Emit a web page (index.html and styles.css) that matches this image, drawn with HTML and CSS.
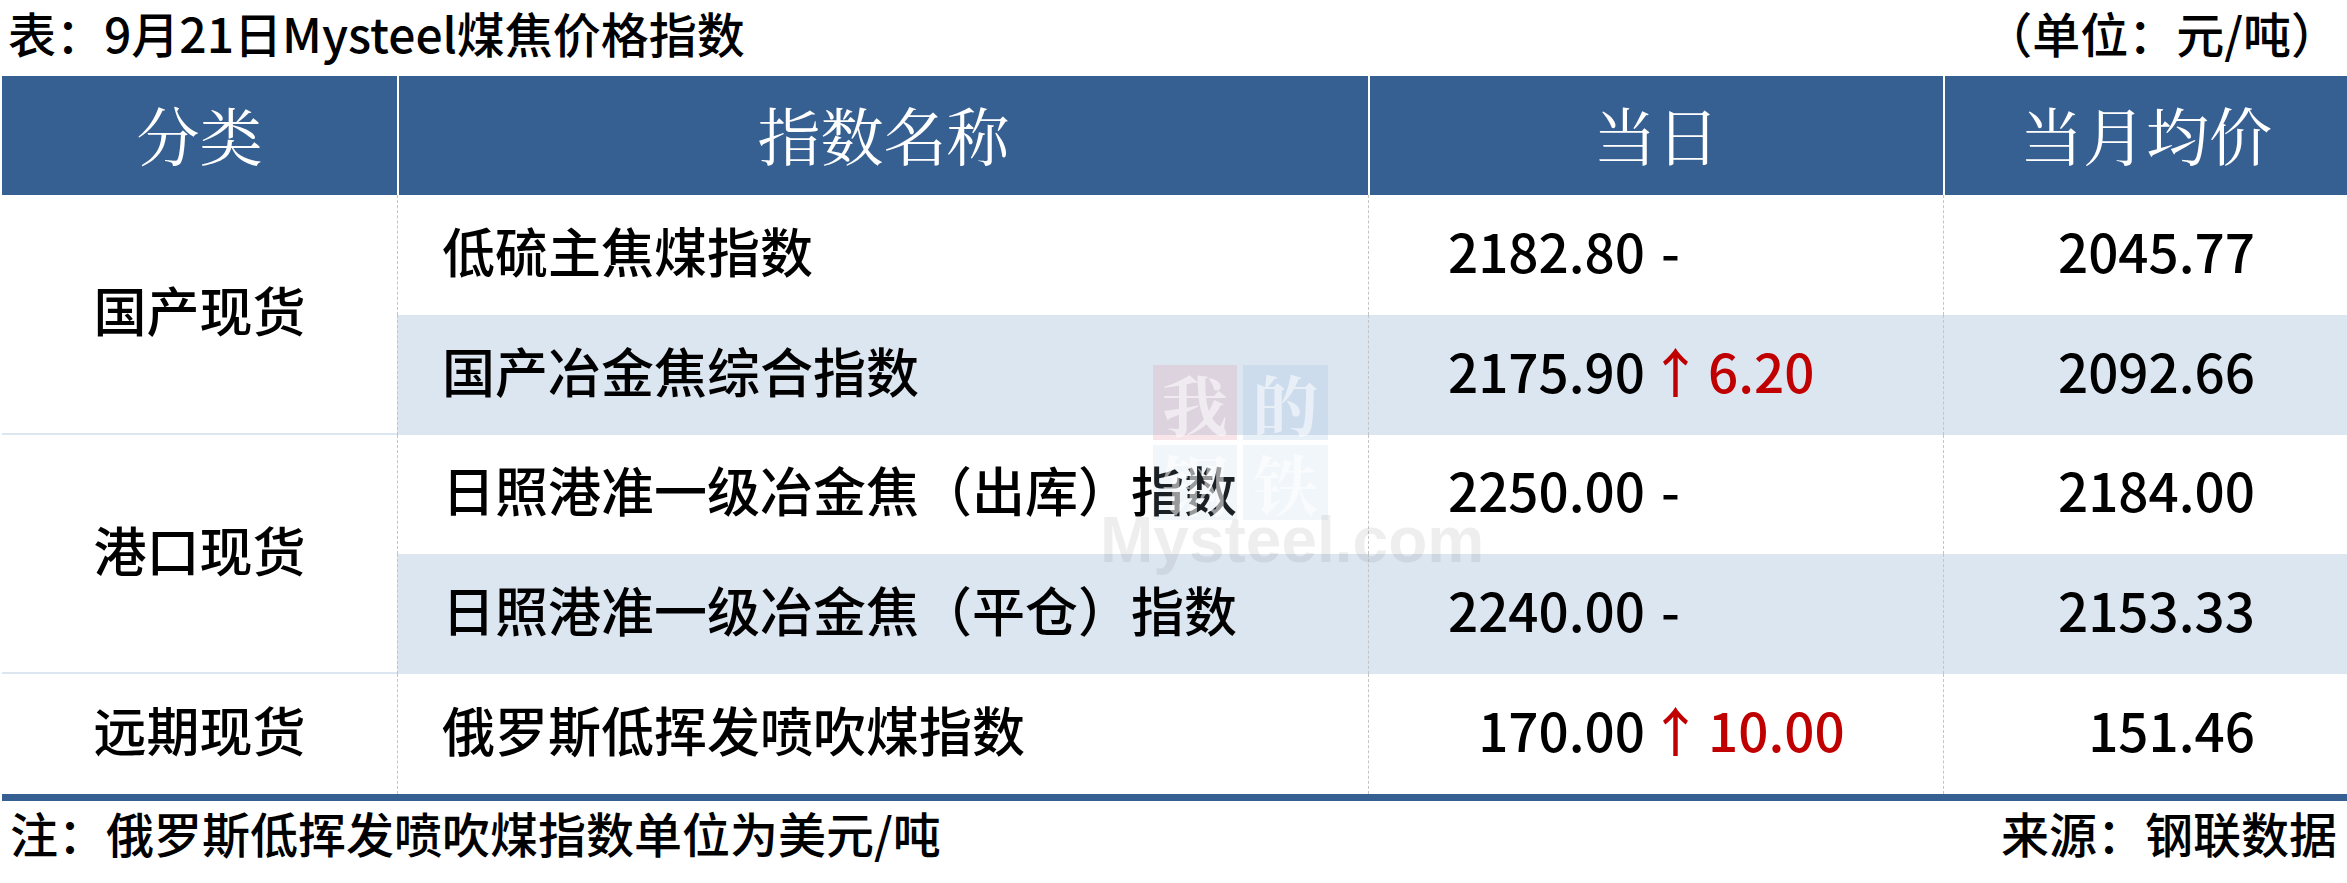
FILE: index.html
```html
<!DOCTYPE html>
<html lang="zh-CN">
<head>
<meta charset="utf-8">
<title>9月21日Mysteel煤焦价格指数</title>
<link rel="stylesheet" href="styles.css">
</head>
<body>
<div class="page">
  <div class="titlebar">
    <span class="title">表：9月21日Mysteel煤焦价格指数</span>
    <span class="unit">（单位：元/吨）</span>
  </div>
  <div class="table">
    <div class="th">分类</div>
    <div class="th sep">指数名称</div>
    <div class="th sep">当日</div>
    <div class="th sep">当月均价</div>

    <div class="group g-line">国产现货</div>
    <div class="cell name">低硫主焦煤指数</div>
    <div class="cell day"><span class="num">2182.80</span><span class="flat">-</span></div>
    <div class="cell avg">2045.77</div>

    <div class="cell name alt">国产冶金焦综合指数</div>
    <div class="cell day alt"><span class="num">2175.90</span><span class="arrow">↑</span><span class="chg">6.20</span></div>
    <div class="cell avg alt">2092.66</div>

    <div class="group g-line">港口现货</div>
    <div class="cell name">日照港准一级冶金焦（出库）指数</div>
    <div class="cell day"><span class="num">2250.00</span><span class="flat">-</span></div>
    <div class="cell avg">2184.00</div>

    <div class="cell name alt">日照港准一级冶金焦（平仓）指数</div>
    <div class="cell day alt"><span class="num">2240.00</span><span class="flat">-</span></div>
    <div class="cell avg alt">2153.33</div>

    <div class="group single">远期现货</div>
    <div class="cell name">俄罗斯低挥发喷吹煤指数</div>
    <div class="cell day"><span class="num">170.00</span><span class="arrow">↑</span><span class="chg">10.00</span></div>
    <div class="cell avg">151.46</div>
  </div>
  <div class="footer">
    <span class="note">注：俄罗斯低挥发喷吹煤指数单位为美元/吨</span>
    <span class="source">来源：钢联数据</span>
  </div>
  <div class="watermark" aria-hidden="true">
    <div class="wm-grid">
      <span class="wm-sq red">我</span>
      <span class="wm-sq blue">的</span>
      <span class="wm-sq blue light">钢</span>
      <span class="wm-sq blue light">铁</span>
    </div>
    <div class="wm-text">Mysteel.com</div>
  </div>
</div>
</body>
</html>
```
FILE: styles.css
```css
html, body {
  margin: 0;
  padding: 0;
  background: #ffffff;
}
body {
  font-family: "Noto Sans CJK SC", "Noto Sans", sans-serif;
  font-weight: 500;
  color: #000000;
}
.page {
  position: relative;
  width: 2347px;
  height: 883px;
  overflow: hidden;
}
.titlebar {
  height: 76px;
  box-sizing: border-box;
  display: flex;
  justify-content: space-between;
  align-items: center;
  padding: 0 8px 12px 8px;
  font-size: 48px;
  line-height: 1.25;
}
.table {
  margin-left: 2px;
  display: grid;
  grid-template-columns: 395px 971px 575px 404px;
  grid-template-rows: 119px 120px 120px 119px 120px 120px;
  border-bottom: 7px solid #376092;
}
.th {
  background: #376092;
  color: #ffffff;
  font-family: "Noto Serif CJK SC", "AR PL UMing CN", "SimSun", "Noto Sans CJK SC", serif;
  font-weight: 400;
  font-size: 63px;
  line-height: 1.2;
  display: flex;
  align-items: center;
  justify-content: center;
  box-sizing: border-box;
  padding-bottom: 5px;
}
.th.sep {
  border-left: 2px solid #ffffff;
}
.group {
  grid-row: span 2;
  display: flex;
  align-items: center;
  justify-content: center;
  font-size: 53px;
  line-height: 1.2;
  box-sizing: border-box;
  padding-bottom: 8px;
}
.group.single {
  grid-row: span 1;
}
.group.g-line {
  border-bottom: 2px solid #dce6f1;
}
.cell {
  display: flex;
  align-items: center;
  font-size: 53px;
  line-height: 1.2;
  border-left: 1px dashed #c4c4c4;
  box-sizing: border-box;
  padding-bottom: 9px;
}
.cell.alt {
  background: #dce6f1;
}
.name {
  padding-left: 44px;
}
.num {
  display: inline-block;
  width: 276px;
  text-align: right;
}
.flat {
  margin-left: 16px;
}
.arrow {
  color: #c00000;
  margin-left: 4px;
}
.chg {
  color: #c00000;
  margin-left: 6px;
}
.avg {
  justify-content: flex-end;
  padding-right: 92px;
}
.footer {
  height: 82px;
  box-sizing: border-box;
  display: flex;
  justify-content: space-between;
  align-items: center;
  padding: 0 10px 20px 10px;
  font-size: 48px;
  line-height: 1.25;
}
.watermark {
  position: absolute;
  left: 1096px;
  top: 364px;
  width: 420px;
  height: 220px;
  pointer-events: none;
}
.wm-grid {
  position: absolute;
  left: 57px;
  top: 1px;
  display: grid;
  grid-template-columns: 84px 85px;
  grid-template-rows: 75px 75px;
  column-gap: 6px;
  row-gap: 5px;
}
.wm-sq {
  display: flex;
  align-items: center;
  justify-content: center;
  font-family: "Noto Serif CJK SC", "Noto Sans CJK SC", serif;
  font-weight: 700;
  font-size: 66px;
  line-height: 1;
  color: rgba(255, 255, 255, 0.55);
}
.wm-sq.red {
  background: rgba(225, 160, 175, 0.28);
}
.wm-sq.blue {
  background: rgba(150, 185, 225, 0.22);
}
.wm-sq.blue.light {
  background: rgba(170, 200, 230, 0.16);
}
.wm-text {
  position: absolute;
  left: 4px;
  top: 144px;
  font-family: "Liberation Sans", sans-serif;
  font-weight: 700;
  font-size: 64px;
  line-height: 1;
  color: rgba(90, 90, 90, 0.1);
}
```
